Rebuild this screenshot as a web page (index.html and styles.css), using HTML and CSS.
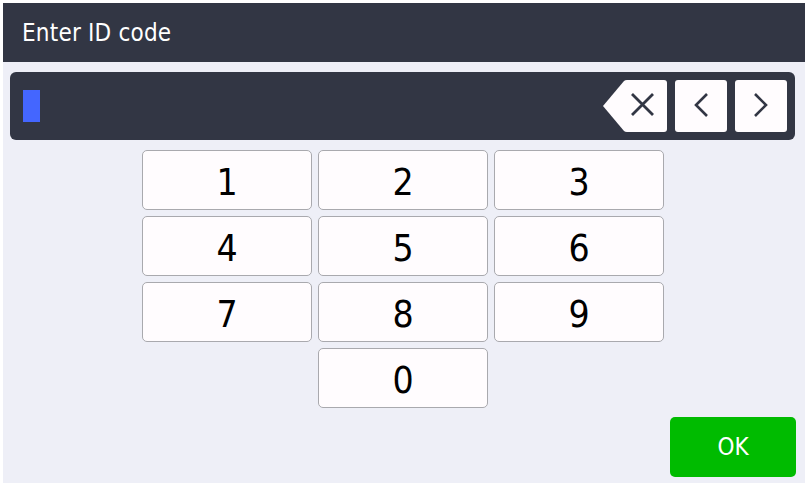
FILE: index.html
```html
<!DOCTYPE html>
<html>
<head>
<meta charset="utf-8">
<link rel="stylesheet" href="styles.css">
</head>
<body>
<div class="screen">
  <header class="title-bar">Enter ID code</header>
  <div class="input-bar">
    <div class="cursor"></div>
    <div class="input-actions">
      <button class="clear-btn" aria-label="Clear">
        <svg width="64" height="52" viewBox="0 0 64 52">
          <path d="M0 26 L21 1 Q22 0 24 0 L61 0 Q64 0 64 3 L64 49 Q64 52 61 52 L24 52 Q22 52 21 51 Z" fill="#fffcfe"/>
          <path d="M29 14 L50 35 M50 14 L29 35" stroke="#323644" stroke-width="2.8" fill="none"/>
        </svg>
      </button>
      <button class="nav-btn" aria-label="Left">
        <svg width="52" height="52" viewBox="0 0 52 52"><path d="M32 14 L21 25 L32 36" stroke="#323644" stroke-width="2.6" fill="none"/></svg>
      </button>
      <button class="nav-btn" aria-label="Right">
        <svg width="52" height="52" viewBox="0 0 52 52"><path d="M20 14 L31 25 L20 36" stroke="#323644" stroke-width="2.6" fill="none"/></svg>
      </button>
    </div>
  </div>
  <div class="keypad">
    <button class="key">1</button>
    <button class="key">2</button>
    <button class="key">3</button>
    <button class="key">4</button>
    <button class="key">5</button>
    <button class="key">6</button>
    <button class="key">7</button>
    <button class="key">8</button>
    <button class="key">9</button>
    <button class="key key-zero">0</button>
  </div>
  <div class="ok-row">
    <button class="ok-btn">OK</button>
  </div>
</div>
</body>
</html>
```
FILE: styles.css
```css
html, body {
  margin: 0;
  padding: 0;
  background: #ffffff;
}
body {
  padding: 3px 0 3px 3px;
  width: 805px;
  height: 486px;
  box-sizing: border-box;
  overflow: hidden;
  font-family: "DejaVu Sans", sans-serif;
}
.screen {
  background: #eeeff7;
  height: 480px;
  display: flex;
  flex-direction: column;
}
.title-bar {
  background: #323644;
  color: #ffffff;
  height: 59px;
  box-sizing: border-box;
  padding-left: 19px;
  padding-top: 1px;
  display: flex;
  align-items: center;
  font-family: "DejaVu Sans Condensed", "DejaVu Sans", sans-serif;
  font-size: 24px;
  letter-spacing: 0.2px;
}
.input-bar {
  margin: 10px 10px 0 7px;
  height: 68px;
  background: #323644;
  border-radius: 6px;
  display: flex;
  align-items: center;
  justify-content: space-between;
  padding: 0 8px 0 13px;
}
.cursor {
  width: 17px;
  height: 32px;
  background: #4466ff;
}
.input-actions {
  display: flex;
  gap: 8px;
  align-items: center;
}
.input-actions button {
  border: none;
  padding: 0;
  margin: 0;
  background: none;
  display: block;
  height: 52px;
}
.input-actions svg {
  display: block;
}
.clear-btn {
  margin-left: 1px !important;
}
.nav-btn {
  width: 52px;
  background: #fffcfe !important;
  border-radius: 3px;
}
.keypad {
  margin-top: 10px;
  align-self: center;
  margin-left: -2px;
  display: grid;
  grid-template-columns: repeat(3, 170px);
  grid-auto-rows: 60px;
  gap: 6px;
}
.key {
  margin: 0;
  padding: 4px 0 0 0;
  background: #fffcfe;
  border: 1px solid #a9a9ae;
  border-radius: 5px;
  font-family: "DejaVu Sans Condensed", "DejaVu Sans", sans-serif;
  font-size: 37px;
  color: #000;
  display: flex;
  align-items: center;
  justify-content: center;
}
.key-zero {
  grid-column: 2;
}
.ok-row {
  display: flex;
  justify-content: flex-end;
  padding-right: 9px;
  margin-top: 9px;
}
.ok-btn {
  width: 126px;
  height: 60px;
  border: none;
  margin: 0;
  padding: 0;
  border-radius: 5px;
  background: #00bb00;
  color: #ffffff;
  font-family: "DejaVu Sans Condensed", "DejaVu Sans", sans-serif;
  font-size: 24px;
}
```
